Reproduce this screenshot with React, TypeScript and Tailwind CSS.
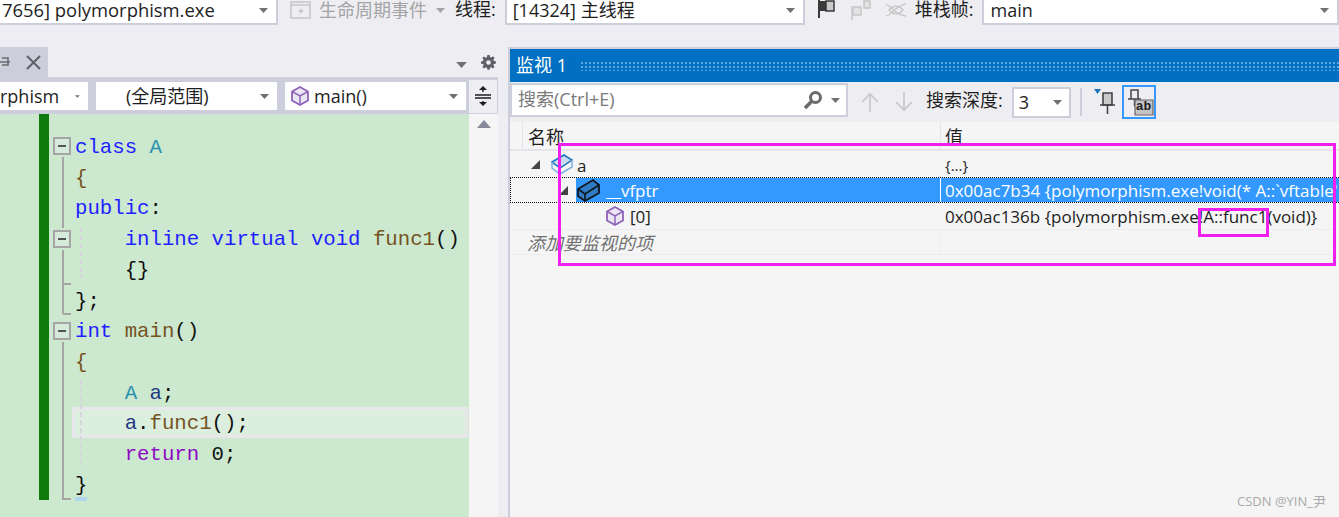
import React from 'react';

const UI = { fontFamily: '"Open Sans", "Noto Sans CJK SC", sans-serif' };
const CODE = { fontFamily: '"Liberation Mono", "Noto Sans CJK SC", monospace' };

const Caret = ({ className = '', color = '#717171' }: { className?: string; color?: string }) => (
  <svg width="9" height="5" viewBox="0 0 9 5" className={className}>
    <path d="M0 0h9L4.5 5z" fill={color} />
  </svg>
);

const Cube = () => (
  <svg width="22" height="22" viewBox="0 0 22 22" fill="none" className="shrink-0">
    <path d="M11 2l8 4.5v9L11 20l-8-4.5v-9z" fill="#ece6f4" stroke="#8d63b8" strokeWidth="1.8" />
    <path d="M3 6.5l8 4.5 8-4.5M11 11v9" stroke="#8d63b8" strokeWidth="1.5" />
  </svg>
);

const ClassIcon = ({ dark }: { dark?: boolean }) => (
  <svg width="24" height="24" viewBox="0 0 24 24" fill="none" className="shrink-0">
    {dark ? (
      <>
        <path d="M1 11L16 2l6 5v8L8 23l-7-5z" fill="#2f7cc4" stroke="#10171f" strokeWidth="1.8" />
        <path d="M1 11l7 5 14-9M8 16v7" stroke="#10171f" strokeWidth="1.6" />
      </>
    ) : (
      <>
        <path d="M1 9l12-7 8 5-12 8z" fill="#c9dcf0" stroke="#1c75bc" strokeWidth="1.5" />
        <path d="M1 9v6l8 6 12-7V7M9 15v6" stroke="#7db1dd" strokeWidth="1.5" />
      </>
    )}
  </svg>
);

const Combo = ({ width, text, pad = 'pl-[6px]' }: { width: string; text: string; pad?: string }) => (
  <div className={`${width} h-[25px] bg-white border-r-2 border-b-2 border-l-2 border-[#cccedb] flex items-center ${pad} pr-[8px] justify-between shrink-0 text-[#1e1e1e] text-[18px] whitespace-nowrap`}>
    <span className="-mt-[4px] leading-[18px]">{text}</span>
    <Caret className="-mt-[3px] shrink-0" />
  </div>
);

type Tok = [string, string];
const BLUE = '#1f1fff';
const TEAL = '#2b91af';
const FN = '#74531f';
const BLK = '#111111';
const VAR = '#1f377f';
const PUR = '#8f08c4';

const LINES: Tok[][] = [
  [['class ', BLUE], ['A', TEAL]],
  [['{', FN]],
  [['public', BLUE], [':', BLK]],
  [['    inline virtual void ', BLUE], ['func1', FN], ['()', BLK]],
  [['    {}', BLK]],
  [['};', BLK]],
  [['int ', BLUE], ['main', FN], ['()', BLK]],
  [['{', FN]],
  [['    ', BLK], ['A ', TEAL], ['a', VAR], [';', BLK]],
  [['    ', BLK], ['a', VAR], ['.', BLK], ['func1', FN], ['()', BLK], [';', BLK]],
  [['    ', BLK], ['return ', PUR], ['0;', BLK]],
  [['}', BLK]],
];

const FoldBox = ({ y }: { y: number }) => (
  <g>
    <rect x="5" y={y} width="16" height="16" fill="#d6ead9" stroke="#a5a5a5" strokeWidth="2" />
    <path d={`M9 ${y + 8}h8`} stroke="#555" strokeWidth="2" />
  </g>
);

const Outlining = () => (
  <svg width="40" height="403" viewBox="0 0 40 403" fill="none" className="absolute left-[49px] top-0">
    <FoldBox y={24} />
    <FoldBox y={117} />
    <FoldBox y={209} />
    <path d="M14 43v71M14 136v64M14 170h8M14 200h8M14 228v157h8" stroke="#a5a5a5" strokeWidth="2" />
    <path d="M32 113v51M32 266v87" stroke="#d5d5dc" strokeWidth="2" strokeDasharray="5 3" />
    <path d="M26 385h12" stroke="#aed6ee" strokeWidth="4" />
  </svg>
);

const Editor = () => (
  <div className="relative flex h-[403px] overflow-hidden">
    <div className="relative flex-1 flex bg-[#cce8cf]">
      <div className="w-[39px] shrink-0" />
      <div className="w-[10px] h-[386px] bg-[#0f7b0f] shrink-0" />
      <div className="w-[23px] shrink-0" />
      <Outlining />
      <div className="flex-1 pt-[17px] pr-[1px] text-[20.7px] whitespace-pre" style={CODE}>
        {LINES.map((line, i) => (
          <div
            key={i}
            className={`h-[30.73px] leading-[27px] border-[3px] ${i === 9 ? 'border-[#e8e8ec] bg-[#dcefde]' : 'border-transparent'}`}
          >
            {line.map(([t, c], j) => (
              <span key={j} className={c === BLUE ? 'text-[#1f1fff]' : c === TEAL ? 'text-[#2b91af]' : c === FN ? 'text-[#74531f]' : c === VAR ? 'text-[#1f377f]' : c === PUR ? 'text-[#8f08c4]' : 'text-[#111111]'}>
                {t}
              </span>
            ))}
          </div>
        ))}
      </div>
    </div>
    <div className="w-[29px] bg-[#f5f5f5] flex justify-center pt-[6px] shrink-0">
      <svg width="14" height="8" viewBox="0 0 14 8"><path d="M7 0l7 8H0z" fill="#868999" /></svg>
    </div>
  </div>
);

const LeftPanel = () => (
  <div className="w-[498px] shrink-0 flex flex-col">
    <div className="h-[52px] flex items-end justify-between">
      <div className="w-[48px] h-[30px] bg-[#cccedb] flex items-center pr-[7px] justify-between">
        <svg width="10" height="12" viewBox="0 0 10 12" fill="none"><path d="M0 6h10M2 2h6v7H2" stroke="#6d6d70" strokeWidth="1.6" /></svg>
        <svg width="15" height="15" viewBox="0 0 15 15" fill="none"><path d="M1 1l13 13M14 1L1 14" stroke="#5f6168" strokeWidth="2" /></svg>
      </div>
      <div className="flex items-center gap-[14px] pr-[2px] pb-[7px]">
        <Caret className="w-[11px] h-[6px] mt-[4px]" />
        <svg width="15" height="15" viewBox="0 0 16 16">
          <path fillRule="evenodd" fill="#5d5e66" d="M6.8 0h2.4l.4 2.2 1.3.5 1.9-1.3 1.7 1.7-1.3 1.9.5 1.3 2.2.4v2.4l-2.2.4-.5 1.3 1.3 1.9-1.7 1.7-1.9-1.3-1.3.5-.4 2.2H6.8l-.4-2.2-1.3-.5-1.9 1.3-1.7-1.7 1.3-1.9-.5-1.3L0 9.2V6.8l2.2-.4.5-1.3-1.3-1.9 1.7-1.7 1.9 1.3 1.3-.5zM8 5.5a2.5 2.5 0 100 5 2.5 2.5 0 000-5z" />
        </svg>
      </div>
    </div>
    <div className="h-[37px] bg-[#cccedb] flex items-center text-[18px] text-[#1e1e1e] whitespace-nowrap pt-[1px]">
      <div className="w-[88px] h-[28px] bg-white flex items-center justify-end pr-[8px] gap-[16px] shrink-0 overflow-hidden">
        <span className="leading-[24px]">rphism</span>
        <Caret />
      </div>
      <div className="w-[181px] h-[28px] ml-[8px] bg-white flex items-center justify-between pl-[30px] pr-[8px] shrink-0">
        <span className="leading-[24px]">(全局范围)</span>
        <Caret />
      </div>
      <div className="w-[181px] h-[28px] ml-[8px] bg-white flex items-center justify-between pl-[4px] pr-[8px] shrink-0">
        <div className="flex items-center gap-[3px]">
          <Cube />
          <span className="leading-[24px]">main()</span>
        </div>
        <Caret />
      </div>
      <div className="w-[28px] h-[33px] ml-[3px] bg-[#eeeef2] flex items-center justify-center shrink-0">
        <svg width="16" height="20" viewBox="0 0 16 20" fill="none">
          <path d="M0 9h16M0 12h16M8 1v5M8 15v4" stroke="#1e1e1e" strokeWidth="1.4" />
          <path d="M8 0l4 4H4zM8 20l-4-4h8z" fill="#1e1e1e" />
        </svg>
      </div>
    </div>
    <Editor />
  </div>
);

const TopBar = () => (
  <div className="h-[25px] flex text-[18px] leading-[18px] whitespace-nowrap text-[#1e1e1e]" style={UI}>
    <div className="w-[278px] h-[25px] bg-white border-r-2 border-b-2 border-[#cccedb] flex items-center justify-between pl-[2px] pr-[8px] shrink-0">
      <span className="-mt-[4px] text-[18.4px] leading-[18px]">7656] polymorphism.exe</span>
      <Caret className="-mt-[3px]" />
    </div>
    <div className="flex items-center h-[20px] ml-[12px] w-[165px] shrink-0 text-[#a2a4a5]">
      <svg width="21" height="18" viewBox="0 0 21 18" fill="none" className="shrink-0">
        <path d="M1 1h19v16H1zM1 4h19" stroke="#c6c6c6" strokeWidth="1.6" />
        <path d="M12 6l-4 5h3l-2 4 5-6h-3z" fill="#c6c6c6" />
      </svg>
      <span className="ml-[8px]">生命周期事件</span>
      <Caret className="ml-[9px]" color="#a2a4a5" />
    </div>
    <span className="shrink-0">线程:</span>
    <div className="w-[300px] ml-[9px] shrink-0 h-[25px]">
      <Combo width="w-full" text="[14324] 主线程" />
    </div>
    <div className="flex items-start gap-[14px] ml-[12px] w-[90px] shrink-0">
      <svg width="19" height="18" viewBox="0 0 19 18" fill="none" className="shrink-0">
        <path d="M2 0v18" stroke="#3a3a3a" strokeWidth="2" />
        <path d="M3 1h6v10H3z" fill="#3a3a3a" />
        <path d="M9 1h8v10H9z" fill="#c9c9c9" stroke="#3a3a3a" strokeWidth="1.5" />
      </svg>
      <svg width="21" height="20" viewBox="0 0 21 20" fill="none" className="shrink-0">
        <path d="M2 6v14" stroke="#c6c6c6" strokeWidth="1.5" />
        <path d="M3 7h8v8H3zM14 1h6v7h-6z" fill="#e3e3e6" stroke="#c6c6c6" strokeWidth="1.5" />
      </svg>
      <svg width="22" height="16" viewBox="0 0 22 16" fill="none" className="shrink-0 mt-[2px]">
        <path d="M1 2c6 3 8 10 20 12M1 14C8 12 10 4 21 2M4 8c4-5 10-5 14 0-4 5-10 5-14 0z" stroke="#c6c6c6" strokeWidth="1.3" />
      </svg>
    </div>
    <span className="ml-[8px] shrink-0">堆栈帧:</span>
    <div className="ml-[9px] flex-1 h-[25px] min-w-0">
      <Combo width="w-full" text="main" />
    </div>
  </div>
);

const WatchToolbar = () => (
  <div className="h-[40px] flex items-start text-[18px] text-[#1e1e1e] whitespace-nowrap">
    <div className="w-[338px] h-[34px] mt-[1px] bg-white border-[2px] border-[#cccedb] flex items-center pl-[6px] pr-[6px] shrink-0">
      <span className="flex-1 text-[#7a7a7a] -mt-[1px]">搜索(Ctrl+E)</span>
      <svg width="20" height="20" viewBox="0 0 20 20" fill="none" className="mr-[8px]">
        <circle cx="12.5" cy="7.5" r="5" stroke="#6b6b6b" strokeWidth="3" />
        <path d="M8.5 11.5L2 18" stroke="#6b6b6b" strokeWidth="3.5" />
      </svg>
      <Caret />
    </div>
    <svg width="18" height="20" viewBox="0 0 18 20" fill="none" className="ml-[13px] mt-[10px] shrink-0">
      <path d="M9 20V2M1 10l8-8 8 8" stroke="#c6c6c6" strokeWidth="1.6" />
    </svg>
    <svg width="18" height="20" viewBox="0 0 18 20" fill="none" className="ml-[16px] mt-[10px] shrink-0">
      <path d="M9 0v18M1 10l8 8 8-8" stroke="#c6c6c6" strokeWidth="1.6" />
    </svg>
    <span className="ml-[13px] mt-[5px] shrink-0">搜索深度:</span>
    <div className="w-[59px] h-[31px] ml-[9px] mt-[5px] bg-white border-[2px] border-[#cccedb] flex items-center justify-between pl-[5px] pr-[7px] shrink-0">
      <span className="-mt-[1px]">3</span>
      <Caret />
    </div>
    <div className="w-[2px] h-[28px] bg-[#cccedb] ml-[9px] mt-[6px] shrink-0" />
    <svg width="22" height="26" viewBox="0 0 22 26" fill="none" className="ml-[12px] mt-[7px] shrink-0">
      <path d="M0 0h7L3.5 5z" fill="#1c75bc" />
      <path d="M9 4h9v12H9z" fill="#c9c9c9" stroke="#444" strokeWidth="1.6" />
      <path d="M6 16h15M13.5 16v9" stroke="#444" strokeWidth="1.6" />
    </svg>
    <div className="w-[34px] h-[34px] ml-[6px] mt-[3px] border-[2px] border-[#3399ff] bg-[#eeeef2] relative shrink-0">
      <svg width="28" height="28" viewBox="0 0 28 28" fill="none" className="absolute left-[2px] top-[2px]">
        <path d="M5 1h7v9H5zM2 10h13M8.5 10v7" stroke="#444" strokeWidth="1.5" />
        <path d="M9 11h18v15H9z" fill="#c4c4c8" stroke="#666" strokeWidth="1.2" />
      </svg>
      <span className="absolute left-[12px] top-[11px] text-[13px] leading-[18px] font-bold" style={CODE}>ab</span>
    </div>
  </div>
);

const WatchTable = () => (
  <div className="flex-1 bg-[#f5f5f5] text-[17px] text-[#1e1e1e] whitespace-nowrap overflow-hidden">
    <div className="h-[29px] flex border-b-2 border-[#e4e4ea]">
      <div className="w-[12px] shrink-0" />
      <div className="w-[418px] shrink-0 border-l border-[#e4e4ea] pl-[5px] pt-[2px] text-[18px]">名称</div>
      <div className="flex-1 border-l border-[#e4e4ea] pl-[4px] pt-[2px] text-[18px]">值</div>
    </div>
    <div className="h-[25px] flex items-center mt-[1px]">
      <div className="w-[430px] flex items-center shrink-0 pl-[21px]">
        <svg width="9" height="9" viewBox="0 0 9 9"><path d="M9 0v9H0z" fill="#444" /></svg>
        <div className="ml-[11px]"><ClassIcon /></div>
        <span className="ml-[2px] mt-[2px]">a</span>
      </div>
      <div className="flex-1 pl-[5px] text-[15px] mt-[2px]">{'{...}'}</div>
    </div>
    <div className="h-[26px] flex items-center border-y border-l border-dotted border-[#111]">
      <div className="w-[65px] shrink-0 flex justify-end pr-[8px]">
        <svg width="9" height="9" viewBox="0 0 9 9"><path d="M9 0v9H0z" fill="#444" /></svg>
      </div>
      <div className="flex-1 h-full flex items-center bg-[#3399ff] text-white">
        <div className="w-[365px] flex items-center pl-[1px] shrink-0 border-r border-white h-full">
          <ClassIcon dark />
          <span className="ml-[5px] mt-[2px]">__vfptr</span>
        </div>
        <span className="pl-[4px] mt-[2px]">{"0x00ac7b34 {polymorphism.exe!void(* A::`vftable'"}</span>
      </div>
    </div>
    <div className="h-[26px] flex items-center">
      <div className="w-[430px] flex items-center shrink-0 pl-[94px]">
        <Cube />
        <span className="ml-[4px] mt-[2px]">[0]</span>
      </div>
      <span className="pl-[5px] mt-[2px]">0x00ac136b {'{'}polymorphism.exe!A::func1(void){'}'}</span>
    </div>
    <div className="h-[26px] flex items-center border-y border-[#ededf0]">
      <div className="w-[430px] h-full shrink-0 pl-[17px] italic text-[#717171] text-[18px] border-r border-[#ededf0]">添加要监视的项</div>
    </div>
  </div>
);

const RightPanel = () => (
  <div className="flex-1 min-w-0 flex flex-col border-l-2 border-t-2 border-[#cccedb] -mt-[2px]">
    <div className="h-[33px] bg-[#016fc2] flex items-center pl-[6px] text-white text-[18px] whitespace-nowrap shrink-0">
      <span>监视 1</span>
      <div className="flex-1 h-[10px] ml-[13px] bg-[radial-gradient(circle,#5ea6dc_1px,transparent_1.2px)] bg-[length:4px_4px]" />
    </div>
    <WatchToolbar />
    <WatchTable />
  </div>
);

export default function App() {
  return (
    <div className="relative w-[1339px] h-[517px] overflow-hidden bg-[#eeeef2]" style={UI}>
      <TopBar />
      <div className="flex h-[492px]">
        <LeftPanel />
        <div className="w-[10px] shrink-0" />
        <div className="flex-1 min-w-0 flex flex-col pt-[24px]">
          <RightPanel />
        </div>
      </div>
      {/* annotation boxes drawn over the screenshot */}
      <div className="absolute left-[558px] top-[143px] w-[778px] h-[123px] border-[3px] border-[#f01fed]" />
      <div className="absolute left-[1198px] top-[208px] w-[71px] h-[29px] border-[3px] border-[#f01fed]" />
      <div className="absolute left-[1237px] top-[492px] text-[13px] text-[#a9a9a9]">CSDN @YIN_尹</div>
    </div>
  );
}
